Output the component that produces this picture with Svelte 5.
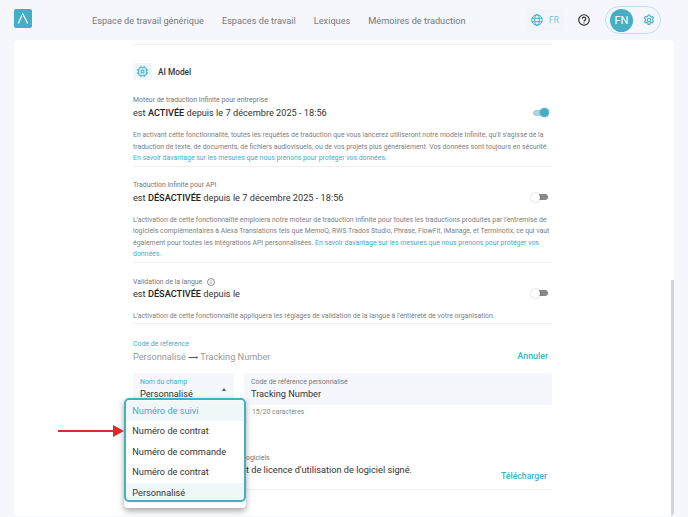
<script>
  const nav = ["Espace de travail générique", "Espaces de travail", "Lexiques", "Mémoires de traduction"];
  const options = ["Numéro de suivi", "Numéro de contrat", "Numéro de commande", "Numéro de contrat", "Personnalisé"];
  const link = "En savoir davantage sur les mesures que nous prenons pour protéger vos données.";
</script>

<div class="page">
  <header class="topbar">
    <div class="logo">
      <svg width="18" height="18" viewBox="0 0 18 18" fill="none" stroke="#fff" stroke-width="1.2">
        <path d="M4.4 14.400 L7.900 6.500" />
        <path d="M8.500 4.300 L13.700 14.400" />
      </svg>
    </div>
    <nav class="nav">
      {#each nav as item}
        <span>{item}</span>
      {/each}
    </nav>
    <div class="tools">
      <div class="lang">
        <svg width="12" height="12" viewBox="0 0 24 24" fill="none" stroke="#45aec5" stroke-width="2">
          <circle cx="12" cy="12" r="10.500" />
          <ellipse cx="12" cy="12" rx="4.500" ry="10.500" />
          <path d="M2 8.500h20M2 15.500h20" />
        </svg>
        <span>FR</span>
      </div>
      <svg class="help" width="12" height="12" viewBox="0 0 24 24" fill="none" stroke="#222" stroke-width="2.200">
        <circle cx="12" cy="12" r="10.500" />
        <path d="M8.500 9.500a3.500 3.500 0 1 1 5.400 2.900c-1.200.8-1.900 1.500-1.900 2.800" />
        <path d="M12 17.200v1.800" />
      </svg>
      <div class="account">
        <div class="avatar">FN</div>
        <svg width="12" height="12" viewBox="0 0 24 24" fill="none" stroke="#45aec5" stroke-width="2.200" stroke-linejoin="round">
          <circle cx="12" cy="12" r="3.400" />
          <path d="M10.200 2h3.600l.6 2.900 2 1.100 2.800-.9 1.800 3.100-2.200 2v2.400l2.200 2-1.800 3.100-2.800-.9-2 1.100-.6 2.900h-3.600l-.6-2.900-2-1.100-2.800.9-1.800-3.100 2.200-2v-2.400l-2.200-2 1.800-3.100 2.800.9 2-1.100z" />
        </svg>
      </div>
    </div>
  </header>

  <main class="card">
    <div class="content">
      <div class="section-head">
        <div class="chip">
          <svg width="13" height="13" viewBox="0 0 24 24" fill="none" stroke="#45aec5" stroke-width="2">
            <rect x="5" y="5" width="14" height="14" rx="3" />
            <rect x="9.500" y="9.500" width="5" height="5" />
            <path d="M9 1.500v3M15 1.500v3M9 19.500v3M15 19.500v3M1.500 9h3M1.500 15h3M19.500 9h3M19.500 15h3" />
          </svg>
        </div>
        <span>AI Model</span>
      </div>

      <section class="setting">
        <div class="small">Moteur de traduction Infinite pour entreprise</div>
        <div class="status">
          <span>est <b>ACTIVÉE</b> depuis le 7 décembre 2025 - 18:56</span>
          <span class="toggle on"></span>
        </div>
        <p>En activant cette fonctionnalité, toutes les requêtes de traduction que vous lancerez utiliseront notre modèle Infinite, qu'il s'agisse de la traduction de texte, de documents, de fichiers audiovisuels, ou de vos projets plus généralement. Vos données sont toujours en sécurité. <a href="#top">{link}</a></p>
      </section>

      <section class="setting">
        <div class="small">Traduction Infinite pour API</div>
        <div class="status">
          <span>est <b>DÉSACTIVÉE</b> depuis le 7 décembre 2025 - 18:56</span>
          <span class="toggle"></span>
        </div>
        <p>L'activation de cette fonctionnalité emploiera notre moteur de traduction Infinite pour toutes les traductions produites par l'entremise de logiciels complémentaires à Alexa Translations tels que MemoQ, RWS Trados Studio, Phrase, FlowFit, iManage, et Terminotix, ce qui vaut également pour toutes les intégrations API personnalisées. <a href="#top">{link}</a></p>
      </section>

      <section class="setting">
        <div class="small info">
          Validation de la langue
          <svg width="8" height="8" viewBox="0 0 24 24" fill="none" stroke="#555" stroke-width="2">
            <circle cx="12" cy="12" r="10.500" />
            <path d="M12 10.500v7M12 6.500v2" />
          </svg>
        </div>
        <div class="status tight">
          <span>est <b>DÉSACTIVÉE</b> depuis le</span>
          <span class="toggle"></span>
        </div>
        <p>L'activation de cette fonctionnalité appliquera les réglages de validation de la langue à l'entièreté de votre organisation.</p>
      </section>

      <section class="reference">
        <div class="small teal">Code de référence</div>
        <div class="ref-line">
          <span>Personnalisé <span class="ref-arrow">⟶</span> Tracking Number</span>
          <a href="#top">Annuler</a>
        </div>
        <div class="fields">
          <div class="field select">
            <label class="teal" for="champ">Nom du champ</label>
            <div id="champ" class="value">Personnalisé</div>
            <i class="caret"></i>
          </div>
          <div class="field-wrap">
            <div class="field">
              <label for="code">Code de référence personnalisé</label>
              <div id="code" class="value">Tracking Number</div>
            </div>
            <div class="count">15/20 caractères</div>
          </div>
        </div>
      </section>

      <section class="licence">
        <div class="small">Le contrat de licence d'utilisation de logiciels</div>
        <div class="status">
          <span class="licence-text">Vous avez reçu votre contrat de licence d'utilisation de logiciel signé.</span>
          <a href="#top">Télécharger</a>
        </div>
      </section>
    </div>

    <div class="scrollbar"></div>
  </main>

  <ul class="menu">
    {#each options as option, i}
      <li class:active={i === 0} class:tinted={i === 4}>{option}</li>
    {/each}
  </ul>

  <svg class="arrow" width="68" height="14" viewBox="0 0 68 14">
    <path d="M0 7h56" stroke="#d92d2d" stroke-width="2" />
    <path d="M55 1l11 6-11 6z" fill="#d92d2d" />
  </svg>
</div>

<style>
  :global(body) {
    margin: 0;
    background: #f6f7fc;
    font-family: Roboto, "Liberation Sans", sans-serif;
    color: #333;
  }

  .page {
    position: relative;
    width: 688px;
    height: 517px;
    overflow: hidden;
  }

  .topbar {
    display: flex;
    align-items: center;
    height: 40px;
    padding: 0 27px 0 14px;
  }

  .logo {
    display: flex;
    align-items: center;
    justify-content: center;
    width: 18px;
    height: 19px;
    margin-top: -4px;
    border-radius: 2px;
    background: #45aec5;
  }

  .nav {
    display: flex;
    gap: 18px;
    margin-left: 60px;
    font-size: 9.200px;
    color: #777;
  }

  .tools {
    display: flex;
    align-items: center;
    margin-left: auto;
  }

  .lang {
    display: flex;
    align-items: center;
    gap: 6px;
    height: 22px;
    padding: 0 5px;
    background: #f1f4f9;
    border-radius: 2px;
    font-size: 8.500px;
    color: #7cc5d5;
  }

  .help {
    margin: 0 15px 0 14px;
  }

  .account {
    display: flex;
    align-items: center;
    gap: 10px;
    height: 28px;
    padding: 0 5px 0 4px;
    box-sizing: border-box;
    border: 1px solid #bfe0e8;
    border-radius: 14px;
  }

  .avatar {
    display: flex;
    align-items: center;
    justify-content: center;
    width: 23px;
    height: 23px;
    border-radius: 50%;
    background: #45aec5;
    color: #fff;
    font-size: 11px;
  }

  .card {
    position: relative;
    height: 476px;
    margin: 0 14px;
    background: #fff;
    border-radius: 4px;
    overflow: hidden;
  }

  .content {
    width: 419px;
    margin-left: 119px;
    padding-top: 4px;
  }

  .section-head {
    display: flex;
    align-items: center;
    gap: 6px;
    padding-top: 18px;
    border-top: 1px solid #f0f0f2;
    font-size: 8.300px;
    font-weight: 500;
  }

  .chip {
    display: flex;
    align-items: center;
    justify-content: center;
    width: 19px;
    height: 17px;
    background: #eff7f9;
    border-radius: 2px;
  }

  .small {
    font-size: 6.900px;
    line-height: 10px;
    color: #777;
  }

  .info {
    display: flex;
    align-items: center;
    gap: 5px;
    margin-top: 1px;
  }

  .teal {
    color: #45aec5;
  }

  .setting {
    padding-top: 13px;
    border-bottom: 1px solid #f0f0f2;
  }

  .section-head + .setting {
    padding-top: 15px;
  }

  .status {
    display: flex;
    align-items: center;
    justify-content: space-between;
    height: 13px;
    margin-top: 1px;
    font-size: 9.200px;
    color: #333;
  }

  .status.tight {
    margin-top: 0;
  }

  .status b {
    font-weight: 500;
    color: #222;
  }

  p {
    margin: 11px 0 1px;
    font-size: 6.900px;
    line-height: 11.500px;
    color: #808080;
  }

  a {
    color: #45aec5;
    text-decoration: none;
  }

  .toggle {
    position: relative;
    width: 15px;
    height: 6px;
    margin-right: 4px;
    border-radius: 3px;
    background: #888;
  }

  .toggle::after {
    content: "";
    position: absolute;
    left: -2.500px;
    top: -1.500px;
    width: 9px;
    height: 9px;
    border-radius: 50%;
    background: #fff;
    box-shadow: 0 0 2px rgba(0, 0, 0, 0.3);
  }

  .toggle.on {
    background: #a5d6e1;
  }

  .toggle.on::after {
    left: 7px;
    background: #45aec5;
  }

  .reference {
    padding-top: 15px;
  }

  .ref-line {
    display: flex;
    justify-content: space-between;
    align-items: center;
    height: 14px;
    font-size: 9.200px;
    color: #999;
  }

  .ref-arrow {
    font-size: 7px;
    color: #555;
  }

  .ref-line a {
    margin-right: 4px;
    font-size: 8.800px;
    font-weight: 500;
  }

  .fields {
    display: flex;
    gap: 10px;
    margin-top: 10px;
  }

  .field {
    position: relative;
    height: 32px;
    padding: 4px 7px 0;
    box-sizing: border-box;
    background: #f6f7fc;
    border-radius: 2px 2px 0 0;
  }

  .select {
    width: 101px;
    flex: none;
  }

  .field-wrap {
    flex: 1;
  }

  .field label {
    display: block;
    font-size: 6.900px;
    line-height: 10px;
    color: #777;
  }

  .field label.teal {
    color: #45aec5;
  }

  .value {
    font-size: 9.200px;
    line-height: 14px;
    color: #333;
  }

  .caret {
    position: absolute;
    right: 8px;
    top: 15px;
    border: 2.500px solid transparent;
    border-top: 0;
    border-bottom: 3px solid #555;
  }

  .count {
    padding: 2px 8px 0;
    font-size: 6.900px;
    line-height: 10px;
    color: #888;
  }

  .licence {
    margin-top: 36px;
    padding-bottom: 12px;
    border-bottom: 1px solid #f0f0f2;
  }

  .licence .status {
    align-items: flex-start;
  }

  .licence .status a {
    margin-top: 7px;
    margin-right: 5px;
    font-size: 8.700px;
    font-weight: 500;
  }

  .licence-text {
    white-space: nowrap;
  }

  .scrollbar {
    position: absolute;
    top: 240px;
    right: 0;
    bottom: 0;
    width: 3px;
    background: #d4d4d8;
  }

  .menu {
    position: absolute;
    left: 124px;
    top: 398px;
    width: 122px;
    height: 110px;
    margin: 0;
    padding: 0;
    box-sizing: border-box;
    list-style: none;
    background: #fff;
    border-radius: 4px;
    box-shadow: 0 3px 6px rgba(0, 0, 0, 0.35);
    overflow: hidden;
    font-size: 9.200px;
    color: #333;
  }

  .menu::after {
    content: "";
    position: absolute;
    left: 0;
    top: 0;
    width: 122px;
    height: 104px;
    box-sizing: border-box;
    border: 2.500px solid #45aec5;
    border-radius: 5px;
  }

  .menu li {
    height: 20.500px;
    line-height: 20.500px;
    padding: 0 8.300px;
    white-space: nowrap;
  }

  .menu li:first-child {
    margin-top: 2.500px;
  }

  .menu .active {
    color: #45aec5;
    background: #eff7f9;
  }

  .menu .tinted {
    background: #eff7f9;
  }

  .arrow {
    position: absolute;
    left: 58px;
    top: 424px;
  }
</style>
